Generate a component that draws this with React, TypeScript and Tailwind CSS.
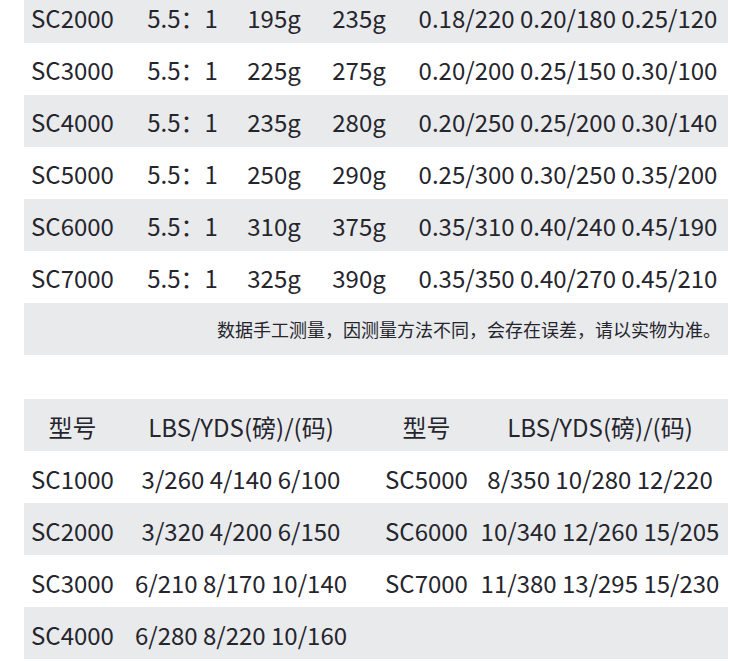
const specRows = [
  ['SC2000', '5.5：1', '195g', '235g', '0.18/220 0.20/180 0.25/120'],
  ['SC3000', '5.5：1', '225g', '275g', '0.20/200 0.25/150 0.30/100'],
  ['SC4000', '5.5：1', '235g', '280g', '0.20/250 0.25/200 0.30/140'],
  ['SC5000', '5.5：1', '250g', '290g', '0.25/300 0.30/250 0.35/200'],
  ['SC6000', '5.5：1', '310g', '375g', '0.35/310 0.40/240 0.45/190'],
  ['SC7000', '5.5：1', '325g', '390g', '0.35/350 0.40/270 0.45/210'],
]

const lineRows = [
  ['SC1000', '3/260 4/140 6/100', 'SC5000', '8/350 10/280 12/220'],
  ['SC2000', '3/320 4/200 6/150', 'SC6000', '10/340 12/260 15/205'],
  ['SC3000', '6/210 8/170 10/140', 'SC7000', '11/380 13/295 15/230'],
  ['SC4000', '6/280 8/220 10/160', '', ''],
]

const font = { fontFamily: '"Noto Sans CJK SC", "Noto Sans", sans-serif' }

function LineRow({ cells, gray }: { cells: string[]; gray: boolean }) {
  return (
    <div className={`flex h-[52px] items-center whitespace-nowrap pt-[3px] ${gray ? 'bg-[#e9eaec]' : 'bg-white'}`}>
      <div className="w-[97px] text-center">{cells[0]}</div>
      <div className="w-[240px] text-center">{cells[1]}</div>
      <div className="w-[17px]" />
      <div className="w-[97px] text-center">{cells[2]}</div>
      <div className="w-[250px] text-center">{cells[3]}</div>
    </div>
  )
}

export default function App() {
  return (
    <div className="h-[661px] w-[750px] overflow-hidden bg-white text-[24px] leading-none text-[#25252d]" style={font}>
      <div className="-mt-[9px] pl-[24px] pr-[22px]">
        {specRows.map((r, i) => (
          <div
            key={r[0]}
            className={`flex h-[52px] items-center whitespace-nowrap pt-[1px] ${i % 2 === 0 ? 'bg-[#e9eaec]' : 'bg-white'}`}
          >
            <div className="w-[97px] text-center">{r[0]}</div>
            <div className="w-[123px] text-center">{r[1]}</div>
            <div className="w-[60px] text-center">{r[2]}</div>
            <div className="w-[110px] text-center">{r[3]}</div>
            <div className="w-[308px] text-center">{r[4]}</div>
          </div>
        ))}
        <div className="flex h-[52px] items-center justify-end bg-[#e9eaec] pr-[7px] text-[18px]">
          数据手工测量，因测量方法不同，会存在误差，请以实物为准。
        </div>
      </div>

      <div className="mt-[44px] pl-[24px] pr-[22px]">
        <LineRow cells={['型号', 'LBS/YDS(磅)/(码)', '型号', 'LBS/YDS(磅)/(码)']} gray />
        {lineRows.map((r, i) => (
          <LineRow key={r[0]} cells={r} gray={i % 2 === 1} />
        ))}
      </div>
    </div>
  )
}
